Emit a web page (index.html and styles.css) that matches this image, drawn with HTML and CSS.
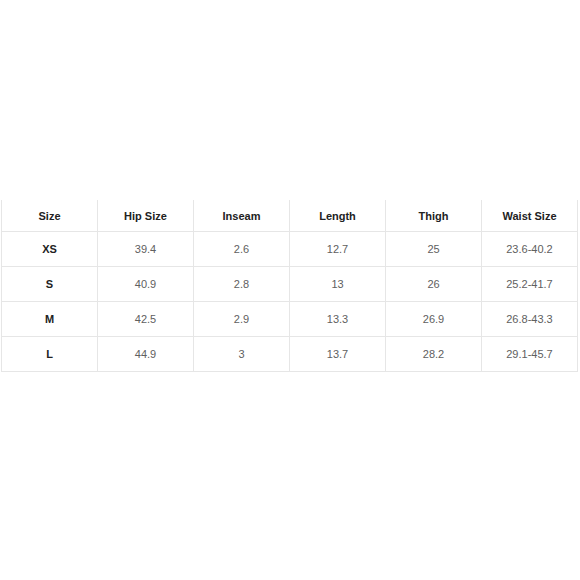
FILE: index.html
```html
<!DOCTYPE html>
<html>
<head>
<meta charset="utf-8">
<link rel="stylesheet" href="styles.css">
</head>
<body>
<table class="size-table">
  <thead>
    <tr><th>Size</th><th>Hip Size</th><th>Inseam</th><th>Length</th><th>Thigh</th><th>Waist Size</th></tr>
  </thead>
  <tbody>
    <tr><th>XS</th><td>39.4</td><td>2.6</td><td>12.7</td><td>25</td><td>23.6-40.2</td></tr>
    <tr><th>S</th><td>40.9</td><td>2.8</td><td>13</td><td>26</td><td>25.2-41.7</td></tr>
    <tr><th>M</th><td>42.5</td><td>2.9</td><td>13.3</td><td>26.9</td><td>26.8-43.3</td></tr>
    <tr><th>L</th><td>44.9</td><td>3</td><td>13.7</td><td>28.2</td><td>29.1-45.7</td></tr>
  </tbody>
</table>
</body>
</html>
```
FILE: styles.css
```css
html, body {
  margin: 0;
  padding: 0;
  background: #ffffff;
}
body {
  font-family: "Liberation Sans", Arial, sans-serif;
}
.size-table {
  margin: 200px 0 0 1px;
  width: 577px;
  table-layout: fixed;
  border-collapse: collapse;
  font-size: 11px;
}
.size-table th,
.size-table td {
  border: 1px solid #e6e6e6;
  text-align: center;
  padding: 0;
}
.size-table thead th {
  border-top: none;
  height: 31px;
  color: #222;
  font-weight: bold;
}
.size-table tbody th {
  color: #222;
  font-weight: bold;
  height: 34px;
}
.size-table tbody td {
  color: #606060;
  height: 34px;
}
```
